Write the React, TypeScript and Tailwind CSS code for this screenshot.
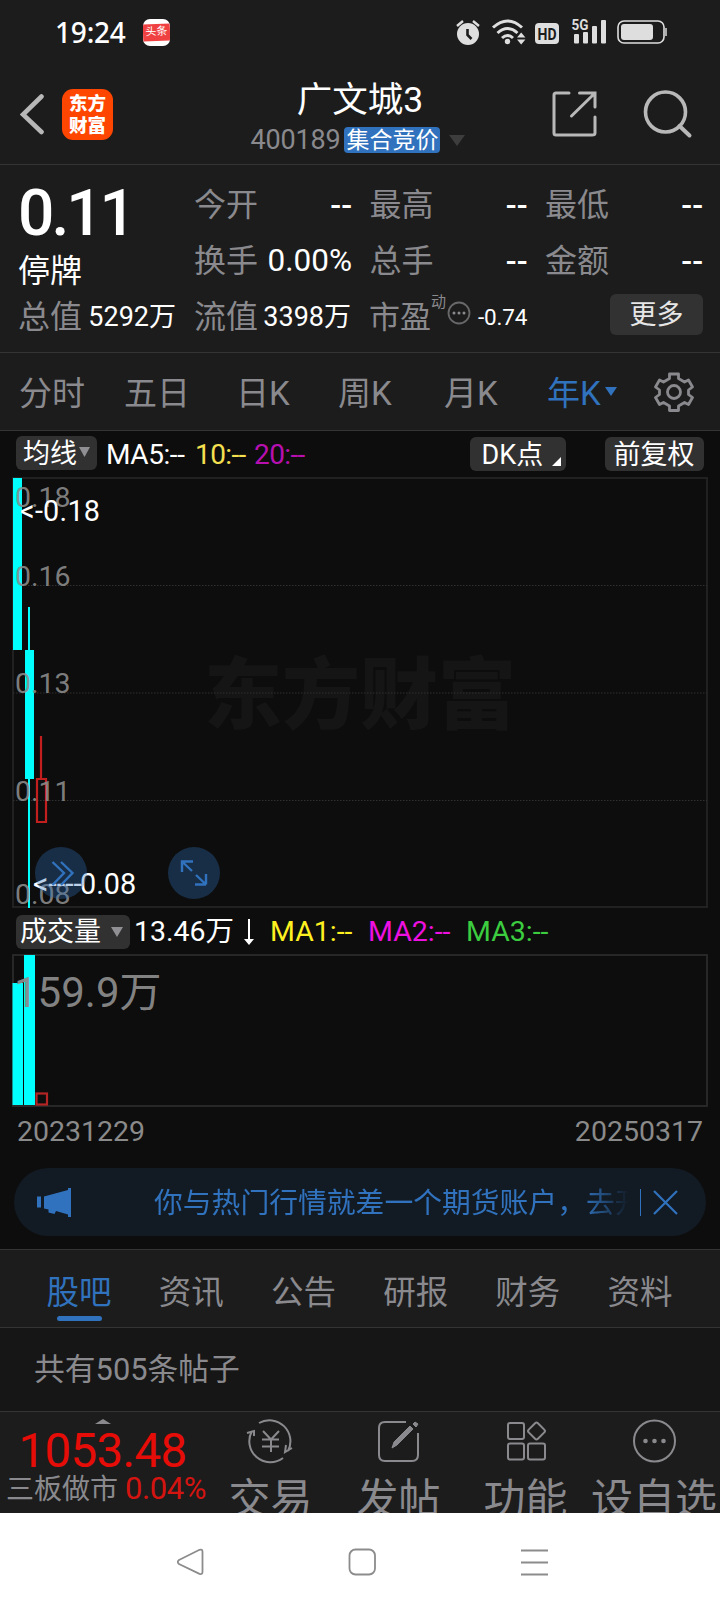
import React from 'react';

interface Quote {
  label: string;
  value: string;
}

const topQuotes: Quote[] = [
  { label: '今开', value: '--' },
  { label: '最高', value: '--' },
  { label: '最低', value: '--' },
  { label: '换手', value: '0.00%' },
  { label: '总手', value: '--' },
  { label: '金额', value: '--' }
];

const infoTabs = ['股吧', '资讯', '公告', '研报', '财务', '资料'];

const gridLines = [585.5, 693, 800.5];

const priceLabels = [
  { text: '0.18', y: 507 },
  { text: '0.16', y: 586 },
  { text: '0.13', y: 693 },
  { text: '0.11', y: 801 },
  { text: '0.08', y: 904 }
];

const StatusBar: React.FC = () => (
  <div className="flex h-16 items-center pl-[55px]">
    <span className="w-[88px] font-['Noto_Sans'] text-[28px] font-medium leading-none tracking-[-0.2px] text-white">19:24</span>
    <div className="flex h-[27px] w-[27px] items-center overflow-hidden rounded-[7px] bg-white">
      <span className="h-[17px] w-full -rotate-2 bg-[#f04142] text-center text-[11px] leading-[16px] text-white">
        头条
      </span>
    </div>
    <svg className="ml-[285px]" width="214" height="32" viewBox="0 0 214 32" fill="none">
      {/* alarm */}
      <g transform="translate(1 3)">
        <circle cx="12" cy="15" r="11" fill="#dedede" />
        <path d="M1 7l6-5M23 7l-6-5" stroke="#dedede" strokeWidth="2.4" />
        <path d="M11.5 10v6l4 4" stroke="#1c1c1c" strokeWidth="2.6" />
      </g>
      {/* wifi */}
      <g stroke="#dedede" strokeWidth="3">
        <path d="M38 11.5q14.5-13 29 0M42.5 17q10-9 20 0M47 22q5.500-5 11 0" />
      </g>
      <circle cx="52.5" cy="25.5" r="2.7" fill="#dedede" />
      <path d="M62 21.500l4.200-5 4.200 5zM62 23.500l4.200 5 4.200-5z" fill="#dedede" />
      {/* hd */}
      <rect x="80" y="7" width="24" height="21" rx="4" fill="#dedede" />
      <text x="92" y="23.5" textAnchor="middle" fontFamily="Roboto" fontSize="16.5" fontWeight="700" textLength="19" lengthAdjust="spacingAndGlyphs" fill="#1c1c1c">HD</text>
      {/* signal */}
      <text x="116.500" y="14" fontFamily="Roboto" fontSize="15" fontWeight="700" textLength="17" lengthAdjust="spacingAndGlyphs" fill="#dedede">5G</text>
      <g fill="#dedede">
        <rect x="119" y="18" width="5" height="9.5" rx="1" />
        <rect x="128" y="16" width="5" height="11.5" rx="1" />
        <rect x="137" y="10" width="5" height="17.5" rx="1" />
        <rect x="146" y="4" width="5" height="23.5" rx="1" />
      </g>
      {/* battery */}
      <rect x="163" y="5" width="46" height="22" rx="6" stroke="#dedede" strokeWidth="1.6" />
      <rect x="166" y="8" width="32" height="16" rx="3" fill="#dedede" />
      <rect x="210" y="12" width="2" height="8" fill="#aaa" />
    </svg>
  </div>
);

const Header: React.FC = () => (
  <header className="flex h-[101px] border-b border-[#343434]">
    <div className="flex w-[240px] items-start pl-5 pt-[25px]">
      <svg className="mt-[5px]" width="24" height="42" viewBox="0 0 24 42" fill="none">
        <path d="M21.5 2.500L3 20.500 21.500 38" stroke="#b8b8b8" strokeWidth="4.6" strokeLinecap="round" />
      </svg>
      <div className="ml-[18px] flex h-[51px] w-[51px] flex-col items-center justify-center rounded-[11px] bg-[#fe4600] text-[18.5px] font-black leading-[22px] text-white">
        <span>东方</span>
        <span>财富</span>
      </div>
    </div>
    <div className="flex w-[240px] flex-col items-center pt-[18px]">
      <h1 className="text-[35.5px] leading-[36px] text-white">广文城3</h1>
      <div className="mt-2 flex items-center pr-1">
        <span className="text-[27px] leading-[28px] tracking-[-0.2px] text-[#8a8a8e]">400189</span>
        <span className="ml-1 flex h-[26px] w-24 items-center justify-center whitespace-nowrap rounded bg-[#3072bd] text-[23px] leading-none text-white">
          集合竞价
        </span>
        <svg className="ml-[9px]" width="16" height="11" viewBox="0 0 16 11">
          <path d="M0 0h16L8 11z" fill="#3d3d3d" />
        </svg>
      </div>
    </div>
    <div className="flex w-[240px] pl-[71px] pt-[25px]">
      <svg width="46" height="48" viewBox="0 0 46 48" fill="none" stroke="#b8b8b8" strokeWidth="3" strokeLinecap="round">
        <path d="M18 4H5q-2 0-2 2v38q0 2 2 2h36q3 0 3-2V28M28.5 4H44v14M43 5L20.5 27" />
      </svg>
      <svg className="ml-[46px] mt-[1px]" width="50" height="50" viewBox="0 0 50 50" fill="none" stroke="#b8b8b8" strokeWidth="3.6">
        <circle cx="22.5" cy="22" r="20" />
        <path d="M36.5 36l10 9.500" strokeWidth="4" strokeLinecap="round" />
      </svg>
    </div>
  </header>
);

const QuotePanel: React.FC = () => (
  <section className="h-[188px] border-b border-[#343434] pl-[18px] pt-3 text-[32px] leading-none text-[#8a8a8e]">
    <div className="flex h-28">
      <div className="w-[176px] text-white">
        <div className="pt-[5px] text-[64px] font-medium leading-[64px] tracking-[-3px]">0.11</div>
        <div className="pt-[9px]">停牌</div>
      </div>
      <div className="grid grid-cols-[158px_158px_158px] grid-rows-2 gap-x-[17.5px]">
        {topQuotes.map((quote) => (
          <div key={quote.label} className="flex items-center justify-between">
            <span>{quote.label}</span>
            <span className={quote.value === '--' ? 'font-medium text-white' : 'text-[31.5px] text-white'}>{quote.value}</span>
          </div>
        ))}
      </div>
    </div>
    <div className="flex h-14 items-center">
      <div className="flex w-[158px] items-center justify-between">
        <span>总值</span>
        <span className="text-[27px] text-white">5292万</span>
      </div>
      <div className="ml-[18px] flex w-[157px] items-center justify-between">
        <span>流值</span>
        <span className="text-[27px] text-white">3398万</span>
      </div>
      <span className="ml-[18px] text-[31px]">市盈</span>
      <span className="mb-[30px] text-[15px]">动</span>
      <svg className="mb-2 ml-[1px]" width="24" height="24" viewBox="0 0 24 24">
        <circle cx="12" cy="12" r="10.5" fill="none" stroke="#68686b" strokeWidth="1.8" />
        <g fill="#8a8a8e">
          <circle cx="7" cy="12" r="1.5" />
          <circle cx="12" cy="12" r="1.5" />
          <circle cx="17" cy="12" r="1.5" />
        </g>
      </svg>
      <span className="ml-[7px] w-[49px] whitespace-nowrap text-[22.5px] tracking-[-0.2px] text-white">-0.74</span>
      <button className="mb-1.5 ml-[83px] h-[41px] w-[93px] rounded-md bg-[#323232] pt-0.5 text-[27px] leading-none text-[#e6e6e6]">更多</button>
    </div>
  </section>
);

const PeriodTabs: React.FC = () => (
  <nav className="flex h-[78px] items-center border-b border-[#343434] pl-[19px] text-[33px] leading-none text-[#8a8a8e]">
    <span className="w-[105px] pt-1">分时</span>
    <span className="w-[112px] pt-1">五日</span>
    <span className="w-[102px] pt-1">日K</span>
    <span className="w-[106px] pt-1">周K</span>
    <span className="w-[103px] pt-1">月K</span>
    <span className="flex w-[107px] items-center pt-1 text-[#3072bd]">
      年K
      <svg className="mb-1 ml-1" width="12" height="9" viewBox="0 0 12 9">
        <path d="M0 0h12L6 9z" fill="#3072bd" />
      </svg>
    </span>
    <svg width="40" height="40" viewBox="0 0 40 40" fill="none" stroke="#8a8a8e" strokeWidth="2.8" strokeLinejoin="round">
      <path d="M15.5 2h9v4.500l6 3.500 4-2 4 7-4 3v4.500l4 3-4 7-4-2-6 3.500V38.500h-9V34l-6-3.500-4 2-4-7 4-3V18l-4-3 4-7 4 2 6-3.500z" />
      <circle cx="20" cy="20" r="6.5" />
    </svg>
  </nav>
);

const PriceChart: React.FC = () => (
  <svg className="block" width="720" height="431" viewBox="0 477 720 431" fontFamily="Roboto" fontSize="28.8">
    <text x="360" y="723" textAnchor="middle" fontFamily="Noto Sans CJK SC" fontWeight="900" fontSize="78" fill="#151515">东方财富</text>
    <rect x="13" y="478" width="694" height="429" fill="none" stroke="#242424" strokeWidth="1.8" />
    {gridLines.map((y) => (
      <line key={y} x1="13" x2="707" y1={y} y2={y} stroke="#303030" strokeDasharray="1.5 1.5" />
    ))}
    <rect x="13" y="478" width="9" height="172" fill="#00ffff" />
    <rect x="28" y="607" width="2" height="301" fill="#00ffff" />
    <rect x="25" y="650" width="9" height="129" fill="#00ffff" />
    <path d="M41 736v42M37 779h9v43h-9z" fill="none" stroke="#c41f1f" strokeWidth="2.2" />
    {priceLabels.map((label) => (
      <text key={label.text} x="15" y={label.y} fontSize="28.5" fill="#8c8c8c" fillOpacity="0.9">{label.text}</text>
    ))}
    <text x="20" y="521" textLength="80" fill="#fff">&lt;-0.18</text>
    <text x="33" y="894" textLength="49" lengthAdjust="spacingAndGlyphs" fill="#fff">&lt;----</text>
    <text x="80" y="894" fill="#fff">0.08</text>
    <g fill="#3072bd" fillOpacity="0.33">
      <circle cx="61" cy="873" r="26" />
      <circle cx="194" cy="873" r="26" />
    </g>
    <g fill="none" stroke="#3072bd" strokeWidth="2.4">
      <path d="M52.5 862l11.500 11-11.500 12M61 862l11.500 11L61 885" />
      <path d="M182 872v-10.500h11M182.500 862l9.500 9M206 884.500V874M206 884.500h-11M205.500 884l-9.500-9" />
    </g>
  </svg>
);

const VolumeChart: React.FC = () => (
  <svg className="block" width="720" height="154" viewBox="0 954 720 154">
    <rect x="13" y="955" width="694" height="151" fill="none" stroke="#2b2b2b" strokeWidth="1.8" />
    <rect x="12.5" y="983" width="10.5" height="122" fill="#00ffff" />
    <rect x="24" y="955" width="11" height="150" fill="#00ffff" />
    <rect x="36.5" y="1093.5" width="10.5" height="11" fill="none" stroke="#b32424" strokeWidth="2.2" />
    <text x="14" y="1007" fontFamily="Roboto, 'Noto Sans CJK SC'" fontSize="42" fill="#8a8a8a" fillOpacity="0.95">159.9万</text>
  </svg>
);

const Charts: React.FC = () => (
  <section className="h-[818px] bg-[#0d0d0d] text-[28px] leading-none text-white">
    <div className="flex h-[46px] items-center pl-4 pb-0.5">
      <span className="flex h-[34px] w-[81px] items-center rounded-md bg-[#313131] pl-[7px] pt-0.5 text-[27px]">
        均线
        <svg className="mb-1 ml-0.5" width="11" height="10" viewBox="0 0 11 10">
          <path d="M0 0h11L5.5 10z" fill="#909094" />
        </svg>
      </span>
      <span className="ml-[9px] w-[89px] pt-1 tracking-[-0.4px]">MA5:--</span>
      <span className="w-[59px] pt-1 tracking-[-0.6px] text-[#f5e050]">10:--</span>
      <span className="w-[54px] pt-1 tracking-[-0.6px] text-[#b810b0]">20:--</span>
      <span className="ml-[161.5px] mt-[2px] flex h-[34px] w-24 items-center rounded-md bg-[#313131] pl-3 pt-0.5 text-[27px]">
        DK点
        <svg className="ml-[9px] mt-3" width="9" height="9" viewBox="0 0 9 9">
          <path d="M9 0v9H0z" fill="#fff" />
        </svg>
      </span>
      <span className="ml-[39px] mt-[2px] flex h-[34px] w-[99px] items-center justify-center rounded-md bg-[#313131] pt-0.5 text-[27px]">前复权</span>
    </div>
    <PriceChart />
    <div className="flex h-[46px] items-center pl-4">
      <span className="mt-[1px] flex h-[34px] w-[114px] items-center rounded-md bg-[#313131] pl-1 pt-0.5 text-[27px]">
        成交量
        <svg className="mb-0.5 ml-[10px]" width="12" height="10" viewBox="0 0 12 10">
          <path d="M0 0h12L6 10z" fill="#909094" />
        </svg>
      </span>
      <span className="ml-[4px] w-[110px] pt-0.5 text-[28.5px]">13.46万</span>
      <svg className="mt-0.5" width="10" height="26" viewBox="0 0 10 26">
        <path d="M4 0h2v20h4l-5 6-5-6h4z" fill="#fff" />
      </svg>
      <span className="ml-[16px] w-[98px] pt-0.5 text-[28.5px] text-[#fff020]">MA1:--</span>
      <span className="w-[98px] pt-0.5 text-[28.5px] text-[#ee10e0]">MA2:--</span>
      <span className="pt-0.5 text-[28.5px] text-[#3ccc40]">MA3:--</span>
    </div>
    <VolumeChart />
    <div className="flex h-[60px] items-center justify-between pb-[11px] pl-[17px] pr-[17px] text-[28.5px] text-[#8a8a8a]">
      <span>20231229</span>
      <span>20250317</span>
    </div>
    <div className="mx-[14px] flex h-[68px] items-center rounded-full bg-[#121a23] text-[#3072bd]">
      <svg className="ml-[23px]" width="35" height="30" viewBox="0 0 35 30" fill="#3072bd">
        <path d="M0 9.500h4v11H0zM7 9.500L31 3V1h3v29h-3v-2.500l-12-3.500-1.500 3-6-1.500V22.500L7 21.500z" />
      </svg>
      <div className="ml-[82px] w-[475px] overflow-hidden whitespace-nowrap pb-1 pt-[7px] text-[28.8px] [mask-image:linear-gradient(to_right,black_430px,transparent_475px)]">
        你与热门行情就差一个期货账户，去开户
      </div>
      <span className="ml-[11px] h-[27px] w-px bg-[#3072bd]" />
      <svg className="ml-3" width="25" height="25" viewBox="0 0 25 25" stroke="#3072bd" strokeWidth="2.2">
        <path d="M1 1l23 23M24 1L1 24" />
      </svg>
    </div>
  </section>
);

const InfoTabs: React.FC = () => (
  <nav className="flex h-[79px] border-y border-[#343434] pl-[23px] text-[32.5px] leading-none text-[#8a8a8e]">
    {infoTabs.map((tab, index) => (
      <div
        key={tab}
        className={index === 0 ? 'flex w-[112.2px] flex-col items-center text-[#3072bd]' : 'flex w-[112.2px] flex-col items-center'}
      >
        <span className="mt-[27px]">{tab}</span>
        {index === 0 && <span className="mt-1.5 h-[5px] w-[45px] rounded-full bg-[#3072bd]" />}
      </div>
    ))}
  </nav>
);

const actions = [
  {
    label: '交易',
    width: 'w-[131px]',
    icon: (
      <>
        <path d="M13 5A21 21 0 0 1 42 33M37 40A21 21 0 0 1 6 13M1 15l7-2v5M40 27l-1 7 7-4" />
        <path d="M17 13l8 8.500 8-8.500M16 21.500h17M16 28.500h17M25 21v13" />
      </>
    )
  },
  {
    label: '发帖',
    width: 'w-[125px]',
    icon: (
      <>
        <path d="M32 4H11q-6 0-6 6v27q0 6 6 6h27q6 0 6-6V15" />
        <path d="M18 30l2-6L36 8l3 3-16 16zM39 6l2-2 3 2-2 3z" fill="#8a8a8e" strokeWidth="1" />
      </>
    )
  },
  {
    label: '功能',
    width: 'w-[129px]',
    icon: (
      <>
        <rect x="7" y="5" width="16" height="16" rx="2" />
        <rect x="7" y="25.5" width="16" height="16" rx="2" />
        <rect x="27" y="25.5" width="17" height="16" rx="2" />
        <rect x="29" y="6.5" width="13" height="13" rx="2" transform="rotate(45 35.5 13)" />
      </>
    )
  },
  {
    label: '设自选',
    width: 'w-[128px]',
    icon: (
      <>
        <circle cx="24.5" cy="23" r="20.5" />
        <g fill="#8a8a8e" stroke="none">
          <circle cx="15.5" cy="23" r="2.3" />
          <circle cx="24.5" cy="23" r="2.3" />
          <circle cx="33.5" cy="23" r="2.3" />
        </g>
      </>
    )
  }
];

const BottomBar: React.FC = () => (
  <footer className="flex h-[102px] overflow-hidden border-t border-[#343434] leading-none text-[#8a8a8e]">
    <div className="flex w-[205px] flex-col items-center">
      <svg className="mt-[7px]" width="16" height="5" viewBox="0 0 16 5">
        <path d="M8 0l8 5H0z" fill="#8a8a8e" />
      </svg>
      <span className="mt-[3px] text-[47.5px] leading-[48px] tracking-[-0.7px] text-[#e60c08]">1053.48</span>
      <div className="-mt-[2px] flex items-center gap-[7px] self-start whitespace-nowrap pl-[6px] text-[28px]">
        <span className="pt-0.5">三板做市</span>
        <span className="text-[31px] tracking-[-0.4px] text-[#d41410]">0.04%</span>
      </div>
    </div>
    {actions.map((action) => (
      <div key={action.label} className={`${action.width} flex flex-none flex-col items-center whitespace-nowrap`}>
        <svg className="mt-[6px] flex-none" width="49" height="46" viewBox="0 0 49 46" fill="none" stroke="#8a8a8e" strokeWidth="2">
          {action.icon}
        </svg>
        <span className="mt-[15px] text-[42px]">{action.label}</span>
      </div>
    ))}
  </footer>
);

const SystemNav: React.FC = () => (
  <div className="flex h-[99px] items-center bg-white pb-0.5 pl-[177px]">
    <svg width="372" height="28" viewBox="0 0 372 28" fill="none" stroke="#8c8c8c" strokeWidth="1.8">
      <path d="M2 12L22.5 1.800q3-1 3 2v20q0 3-3 2L2 16q-2.500-2 0-4z" />
      <rect x="172.5" y="1.5" width="25.5" height="25" rx="6" />
      <path d="M344 2.500h27M344 14.500h27M344 26.500h27" strokeWidth="2" />
    </svg>
  </div>
);

const App: React.FC = () => {
  return (
    <div className="h-[1612px] w-[720px] overflow-hidden bg-[#1c1c1c] font-[Roboto,'Noto_Sans_CJK_SC',sans-serif]">
      <StatusBar />
      <Header />
      <QuotePanel />
      <PeriodTabs />
      <Charts />
      <InfoTabs />
      <div className="flex h-[83px] items-center bg-[#161616] pl-[34px] pt-0.5 text-[30.8px] leading-none text-[#8a8a8e]">
        共有505条帖子
      </div>
      <BottomBar />
      <SystemNav />
    </div>
  );
};

export default App;
